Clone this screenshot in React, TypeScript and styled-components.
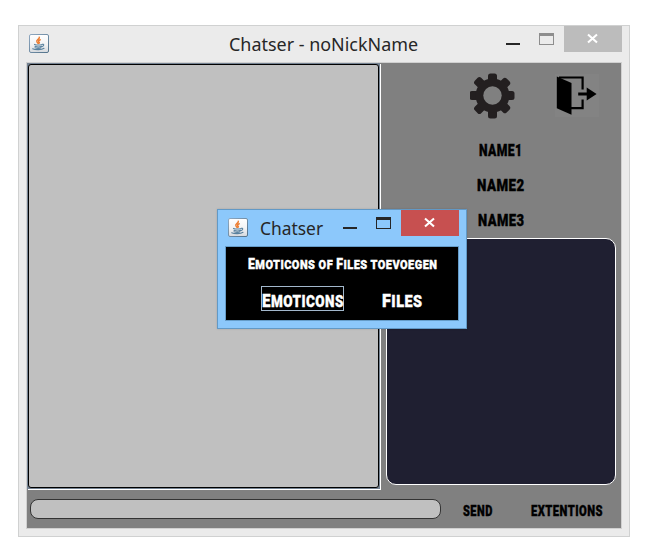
import React from "react";
import styled, { createGlobalStyle } from "styled-components";

const Global = createGlobalStyle`
  *{box-sizing:border-box}
  body{margin:0;background:#fff;overflow:hidden;font-family:"Open Sans","Noto Sans",sans-serif}
  svg{display:block}
`;

const Desktop = styled.main`
  position: relative;
  width: 662px;
  height: 560px;
  padding: 25px 0 0 18px;
`;
const AppWindow = styled.section`
  width: 612px;
  height: 512px;
  border: 1px solid #d0d1d1;
  background: #ebebeb;
  padding: 0 7px 8px;
`;
const TitleBar = styled.header`
  display: flex;
  align-items: flex-start;
  height: 36px;
`;
const JavaSlot = styled.span`
  flex: none;
  margin: 8px 0 0 3px;
`;
const Caption = styled.h1<{ $left: number; $w: number }>`
  flex: none;
  margin: 5px 0 0 ${(p) => p.$left}px;
  width: ${(p) => p.$w}px;
  font: 400 18.5px/26px "Noto Sans", sans-serif;
  color: #262626;
  white-space: nowrap;
`;
const CaptionText = styled.span<{ $sx: number }>`
  display: inline-block;
  transform: scaleX(${(p) => p.$sx});
  transform-origin: 0 50%;
`;
const Controls = styled.div`
  display: flex;
  margin-left: auto;
`;
const CloseButton = styled.button<{ $bg: string }>`
  width: 58px;
  height: 26px;
  padding: 0;
  border: 0;
  background: ${(p) => p.$bg};
`;
const Client = styled.div`
  display: grid;
  grid-template-columns: 354px 240px;
  grid-template-rows: 427px 38px;
  width: 596px;
  height: 467px;
  border: 1px solid #d0d0d0;
  background: #808080;
`;
const ChatFrame = styled.div`
  width: 353px;
  height: 426px;
  padding: 1px;
  background: #748292;
  box-shadow: 1px 1px 0 #fff;
`;
const ChatLog = styled.div`
  height: 424px;
  border: 1px solid #000;
  border-radius: 3px;
  background: #c0c0c0;
`;
const Side = styled.aside`
  display: flex;
  flex-direction: column;
`;
const Tools = styled.div`
  display: flex;
  height: 70px;
  padding: 10px 0 0 89px;
  gap: 39px;
`;
const Names = styled.ul`
  margin: 0;
  padding: 0 0 0 97px;
  height: 105px;
  list-style: none;
`;
const NameRow = styled.li<{ $shift: number }>`
  height: 35px;
  margin-left: ${(p) => p.$shift}px;
`;
const UserPanel = styled.div`
  width: 230px;
  height: 247px;
  margin-left: 5px;
  border: 1px solid #fff;
  border-radius: 10px;
  background: #1f1f31;
`;
const Footer = styled.footer`
  grid-column: 1 / 3;
  display: flex;
  padding: 9px 0 0 3px;
`;
const MessageField = styled.div`
  width: 411px;
  height: 20px;
  border: 1px solid #333;
  border-radius: 8px;
  background: #c0c0c0;
`;
const FooterAction = styled.div<{ $left: number }>`
  margin-left: ${(p) => p.$left}px;
`;

const GrungeBox = styled.span<{ $w: number; $h: number }>`
  display: block;
  width: ${(p) => p.$w}px;
  height: ${(p) => p.$h}px;
`;
const GrungeText = styled.span<{ $size: number; $sx: number; $h: number; $color: string }>`
  display: inline-block;
  font: 900 ${(p) => p.$size}px/${(p) => p.$h}px "Roboto", "Liberation Sans", sans-serif;
  letter-spacing: 0.6px;
  color: ${(p) => p.$color};
  -webkit-text-stroke: 0.4px ${(p) => p.$color};
  white-space: nowrap;
  transform: scaleX(${(p) => p.$sx});
  transform-origin: 0 50%;
`;
const Initial = styled.span`
  font-size: 1.12em;
  line-height: 1;
`;

/* Condenses the label horizontally so that it fills exactly its slot. */
function Grunge({ text, w, h, size, color = "#000" }: {
  text: string; w: number; h: number; size: number; color?: string;
}) {
  const ref = React.useRef<HTMLSpanElement>(null);
  const [sx, setSx] = React.useState(0.7);
  React.useLayoutEffect(() => {
    if (ref.current) setSx((w + 0.6) / ref.current.offsetWidth);
  }, [w]);
  return (
    <GrungeBox $w={w} $h={h}>
      <GrungeText ref={ref} $size={size} $sx={sx} $h={h} $color={color}>
        {text === text.toUpperCase()
          ? text
          : text.split(/([A-Z])/).map((s, i) => (i % 2 ? <Initial key={i}>{s}</Initial> : s.toUpperCase()))}
      </GrungeText>
    </GrungeBox>
  );
}

const Dialog = styled.section`
  position: absolute;
  left: 217px;
  top: 209px;
  width: 250px;
  height: 120px;
  border: 1px solid #6299c6;
  background: #8cc8fb;
  padding: 0 7px 7px;
  box-shadow: 0 0 2px rgba(0, 0, 0, 0.15);
`;
const DialogBody = styled.div`
  width: 234px;
  height: 75px;
  border: 1px solid #659cc8;
  background: #000;
`;
const Prompt = styled.div`
  padding: 5px 0 0 22px;
  height: 39px;
`;
const Choices = styled.div`
  display: flex;
  padding-left: 35px;
  gap: 37px;
`;
const Choice = styled.div<{ $focused?: boolean }>`
  height: 25px;
  padding-top: 3px;
  border: 1px solid ${(p) => (p.$focused ? "#a3b8cc" : "transparent")};
`;

const JavaIcon = () => (
  <svg width="20" height="20" viewBox="0 0 20 20">
    <defs>
      <linearGradient id="jb" x1="0" y1="0" x2="1" y2="1">
        <stop offset="0" stopColor="#8fa8c0" /><stop offset="1" stopColor="#52728a" />
      </linearGradient>
      <linearGradient id="jf" x1="0" y1="0" x2="0" y2="1">
        <stop offset="0" stopColor="#fff" /><stop offset=".55" stopColor="#f2f3f4" /><stop offset="1" stopColor="#d5d9dd" />
      </linearGradient>
    </defs>
    <rect x=".5" y=".5" width="19" height="18" rx="1.5" fill="url(#jf)" stroke="url(#jb)" />
    <g fill="none" strokeLinecap="round">
      <path d="M10.3 3.2c.7 2-3.5 2.6-2.4 4.6.3.5.9.8 1.1 1.6M11.2 5.8c-2.3 1-1.8 1.7-1 2.5.3.3.1.6-.3 1" stroke="#ed7d31" strokeWidth="1.5" />
      <path d="M5.5 10.4c2 .7 5.5.7 7.7 0M6 12.3c1.8.8 5 .8 6.8 0M3.7 14.7c2.8 1.4 9 1.3 11.3-.4M6 13.8c2 .7 4.3.7 6 0M13 10.4c2.4-.8 2.3 1.7-.1 2.2" stroke="#58819e" strokeWidth="1.1" />
    </g>
  </svg>
);

const MinMax = ({ color, minColor, fill }: { color: string; minColor: string; fill: string }) => (
  <svg width="58" height="26" viewBox="0 0 58 26" shapeRendering="crispEdges">
    <path d="M0 17h14v2H0z" fill={minColor} />
    <path d="M33 7h15v12H33z" fill={color} />
    <path d="M34 10h13v8H34z" fill={fill} />
  </svg>
);

const Cross = () => (
  <svg width="58" height="26" viewBox="0 0 58 26">
    <path d="M24 8.5l9 8M33 8.5l-9 8" stroke="#fff" strokeWidth="2.1" />
  </svg>
);

const Gear = () => (
  <svg width="46" height="46" viewBox="0 0 46 46">
    <g fill="#231f20">
      {[0, 45, 90, 135].map((a) => (
        <rect key={a} x="18" y=".5" width="9" height="45" rx="2.5" transform={`rotate(${a} 22.5 22.5)`} />
      ))}
      <circle cx="22.5" cy="22.5" r="17" />
    </g>
    <circle cx="22.5" cy="22.5" r="9.2" fill="#808080" />
  </svg>
);

const ExitDoor = () => (
  <svg width="46" height="46" viewBox="0 0 46 46">
    <rect x="0" y="1" width="44" height="43" fill="#838383" />
    <path d="M4 4.5h23.6v12M27.6 26.5v8.7H16" fill="none" stroke="#000" strokeWidth="2.2" />
    <path d="M1.8 3.5l14.7 6.5v31.8L1.8 35.3z" fill="#000" />
    <path d="M23.2 19.6h8.5v-5L41.6 21l-9.9 6.4v-5h-8.5z" fill="#000" />
  </svg>
);

export default function App() {
  return (
    <>
      <Global />
      <Desktop>
        <AppWindow>
          <TitleBar>
            <JavaSlot><JavaIcon /></JavaSlot>
            <Caption $left={180} $w={190}><Fit text="Chatser - noNickName" w={189} /></Caption>
            <Controls>
              <MinMax color="#8d8d8d" minColor="#262626" fill="#ebebeb" />
              <CloseButton $bg="#bcbcbc" aria-label="Close"><Cross /></CloseButton>
            </Controls>
          </TitleBar>
          <Client>
            <ChatFrame><ChatLog /></ChatFrame>
            <Side>
              <Tools><Gear /><ExitDoor /></Tools>
              <Names>
                <NameRow $shift={1}><Grunge text="NAME1" w={43} h={35} size={17} /></NameRow>
                <NameRow $shift={-1}><Grunge text="NAME2" w={47} h={35} size={17} /></NameRow>
                <NameRow $shift={0}><Grunge text="NAME3" w={46} h={35} size={17} /></NameRow>
              </Names>
              <UserPanel />
            </Side>
            <Footer>
              <MessageField />
              <FooterAction $left={22}><Grunge text="SEND" w={29} h={23} size={14.5} /></FooterAction>
              <FooterAction $left={39}><Grunge text="EXTENTIONS" w={71} h={23} size={14.5} /></FooterAction>
            </Footer>
          </Client>
        </AppWindow>
        <Dialog>
          <TitleBar>
            <JavaSlot><JavaIcon /></JavaSlot>
            <Caption $left={12} $w={63}><Fit text="Chatser" w={63} /></Caption>
            <Controls>
              <MinMax color="#262626" minColor="#262626" fill="#8cc8fb" />
              <CloseButton $bg="#c75050" aria-label="Close"><Cross /></CloseButton>
            </Controls>
          </TitleBar>
          <DialogBody>
            <Prompt><Grunge text="Emoticons of Files toevoegen" w={189} h={18} size={13.5} color="#fff" /></Prompt>
            <Choices>
              <Choice $focused><Grunge text="Emoticons" w={81} h={22} size={17} color="#fff" /></Choice>
              <Choice><Grunge text="Files" w={40} h={22} size={17} color="#fff" /></Choice>
            </Choices>
          </DialogBody>
        </Dialog>
      </Desktop>
    </>
  );
}

/* Window caption text, scaled to its slot width. */
function Fit({ text, w }: { text: string; w: number }) {
  const ref = React.useRef<HTMLSpanElement>(null);
  const [sx, setSx] = React.useState(1);
  React.useLayoutEffect(() => {
    if (ref.current) setSx(w / ref.current.offsetWidth);
  }, [w]);
  return <CaptionText ref={ref} $sx={sx}>{text}</CaptionText>;
}
